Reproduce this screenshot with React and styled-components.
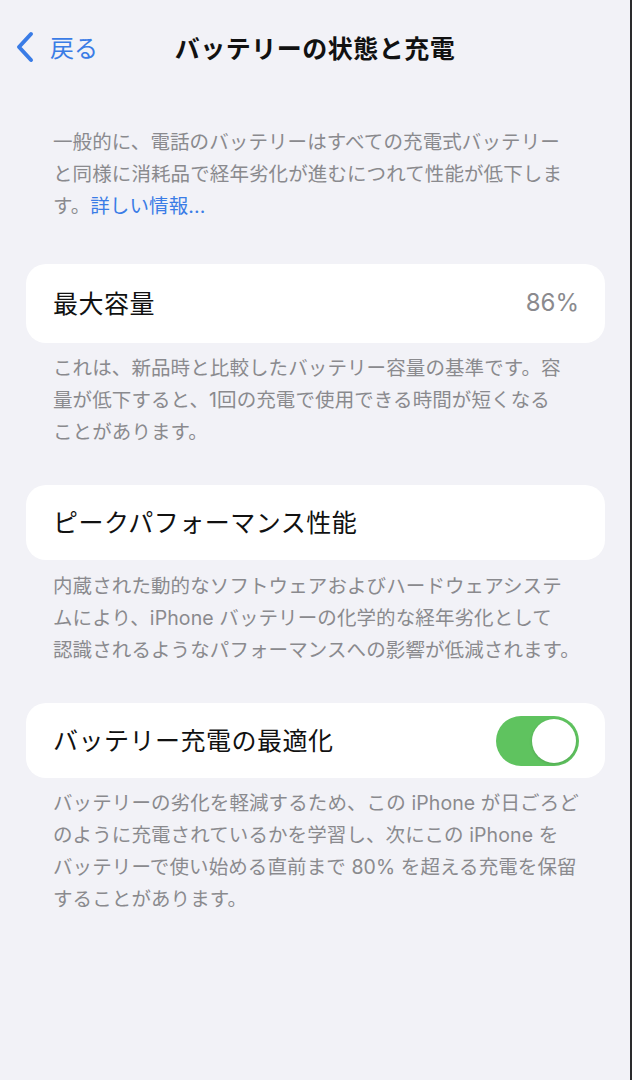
import React, { useState } from 'react';
import styled, { createGlobalStyle } from 'styled-components';

const GlobalStyle = createGlobalStyle`
	html, body {
		margin: 0;
		padding: 0;
		background: #f2f2f7;
	}
	body {
		font-family: "Inter", "Noto Sans CJK JP", sans-serif;
		-webkit-font-smoothing: antialiased;
	}
`;

const Page = styled.div`
	width: 630px;
	min-height: 1080px;
	background: #f2f2f7;
	border-right: 2px solid #2a2a2c;
	box-sizing: content-box;
`;

const NavBar = styled.div`
	position: relative;
	height: 94px;
	display: flex;
	align-items: center;
	justify-content: center;
`;

const Back = styled.button`
	position: absolute;
	left: 14px;
	top: 30px;
	display: flex;
	align-items: center;
	gap: 14px;
	border: none;
	background: none;
	padding: 0;
	color: #3a7ce6;
	font-family: "Noto Sans CJK JP", sans-serif;
	font-size: 24px;
	line-height: 34px;
	cursor: pointer;
`;

const Title = styled.h1`
	margin: 0;
	font-family: "Noto Sans CJK JP", sans-serif;
	font-size: 25px;
	font-weight: 700;
	color: #111;
	letter-spacing: 0.5px;
	line-height: 34px;
`;

const Content = styled.div`
	padding: 32px 25px 0 26px;
	display: flex;
	flex-direction: column;
`;

const Note = styled.p`
	margin: ${(p) => p.$top || 0}px 0 0;
	padding: 0 0 0 27px;
	color: #8a8a8e;
	font-size: 19.5px;
	line-height: 32px;
	letter-spacing: 0.1px;
	white-space: nowrap;
`;

const Link = styled.a`
	color: #3a7ce6;
	text-decoration: none;
`;

const Card = styled.div`
	margin-top: ${(p) => p.$top}px;
	height: ${(p) => p.$h}px;
	background: #fff;
	border-radius: 20px;
	padding: 0 26px 0 27px;
	display: flex;
	align-items: center;
	justify-content: space-between;
`;

const Label = styled.span`
	font-family: "Noto Sans CJK JP", sans-serif;
	font-size: 25px;
	letter-spacing: 0.5px;
	color: #111;
	margin-top: -3px;
`;

const Value = styled.span`
	font-size: 24px;
	color: #8a8a8e;
	margin-top: -3px;
`;

const Toggle = styled.button`
	width: 83px;
	height: 50px;
	border-radius: 25px;
	border: none;
	padding: 3px;
	background: ${(p) => (p.$on ? '#5fc35f' : '#e5e5ea')};
	display: flex;
	justify-content: ${(p) => (p.$on ? 'flex-end' : 'flex-start')};
	cursor: pointer;
`;

const Knob = styled.span`
	width: 44px;
	height: 44px;
	border-radius: 50%;
	background: #fff;
	box-shadow: 0 1px 3px rgba(0, 0, 0, 0.15);
`;

const App = () => {
	const [optimized, setOptimized] = useState(true);
	return (
		<>
			<GlobalStyle />
			<Page>
				<NavBar>
					<Back type="button">
						<svg width="22" height="32" viewBox="0 0 22 32" fill="none">
							<polyline
								points="17,3 5,16 17,29"
								stroke="#3a7ce6"
								strokeWidth="4"
								strokeLinecap="round"
								strokeLinejoin="round"
							/>
						</svg>
						戻る
					</Back>
					<Title>バッテリーの状態と充電</Title>
				</NavBar>
				<Content>
					<Note>
						一般的に、電話のバッテリーはすべての充電式バッテリー
						<br />
						と同様に消耗品で経年劣化が進むにつれて性能が低下しま
						<br />
						す。<Link href="#">詳しい情報...</Link>
					</Note>
					<Card $top={42} $h={79}>
						<Label>最大容量</Label>
						<Value>86%</Value>
					</Card>
					<Note $top={9}>
						これは、新品時と比較したバッテリー容量の基準です。容
						<br />
						量が低下すると、1回の充電で使用できる時間が短くなる
						<br />
						ことがあります。
					</Note>
					<Card $top={37} $h={75}>
						<Label>ピークパフォーマンス性能</Label>
					</Card>
					<Note $top={10}>
						内蔵された動的なソフトウェアおよびハードウェアシステ
						<br />
						ムにより、iPhone バッテリーの化学的な経年劣化として
						<br />
						認識されるようなパフォーマンスへの影響が低減されます。
					</Note>
					<Card $top={37} $h={75}>
						<Label>バッテリー充電の最適化</Label>
						<Toggle type="button" $on={optimized} onClick={() => setOptimized(!optimized)}>
							<Knob />
						</Toggle>
					</Card>
					<Note $top={9}>
						バッテリーの劣化を軽減するため、この iPhone が日ごろど
						<br />
						のように充電されているかを学習し、次にこの iPhone を
						<br />
						バッテリーで使い始める直前まで 80% を超える充電を保留
						<br />
						することがあります。
					</Note>
				</Content>
			</Page>
		</>
	);
};

export default App;
